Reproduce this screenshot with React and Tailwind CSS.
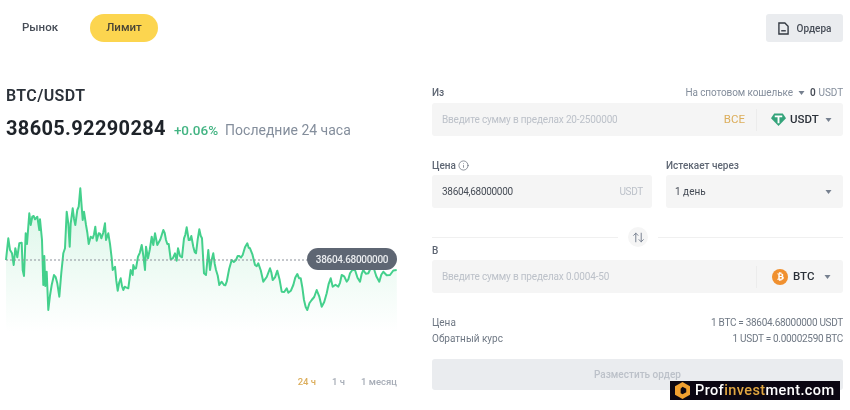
import { ArrowUpDown, Info } from "lucide-react";
import { FaBtc } from "react-icons/fa";

// traced from the reference, in 3x zoom coordinates
const RAW = [
  [18,270],[25,205],[30,240],[36,250],[41,285],[46,235],[52,262],[58,220],[65,218],[68,300],[72,318],[77,190],[81,222],[88,130],[92,165],[97,140],[105,148],[112,140],[118,180],[120,148],[126,210],[130,345],[133,258],[136,348],[140,305],[145,420],[155,345],[162,315],[172,340],[178,380],[190,250],[195,235],[200,125],[205,160],[209,230],[212,160],[218,115],[226,165],[232,120],[236,110],[241,55],[248,150],[252,125],[258,165],[266,222],[272,200],[278,205],[286,170],[290,212],[296,190],[304,205],[315,160],[318,210],[325,190],[335,265],[338,300],[345,290],[353,362],[362,325],[370,360],[378,352],[385,355],[392,300],[398,315],[400,285],[408,295],[414,260],[425,225],[435,300],[438,230],[444,265],[455,200],[460,225],[465,190],[472,225],[490,180],[498,210],[506,222],[512,268],[525,250],[530,272],[534,235],[540,258],[546,262],[552,205],[560,172],[566,210],[574,198],[580,230],[588,250],[598,178],[606,205],[612,310],[618,315],[625,240],[630,300],[640,250],[648,300],[658,345],[665,335],[672,345],[680,335],[695,270],[708,270],[718,258],[728,255],[742,220],[750,235],[765,285],[775,280],[790,335],[810,295],[818,330],[832,302],[845,365],[860,355],[865,368],[880,345],[892,312],[902,325],[912,390],[922,420],[935,390],[950,360],[965,410],[980,370],[992,325],[998,350],[1015,350],[1025,315],[1040,335],[1050,310],[1065,300],[1080,335],[1090,300],[1105,310],[1120,290],[1138,335],[1150,305],[1170,315],[1190,300],
];

// long segments get a midpoint pushed up or down, the real line is noisy
const points = [];
RAW.forEach(([x, y], i) => {
  const prev = RAW[i - 1];
  if (prev && x - prev[0] >= 8) {
    points.push([(x + prev[0]) / 6, (y + prev[1]) / 6 + 170 + (i % 2 ? 2 : -2)]);
  }
  points.push([x / 3, y / 3 + 170]);
});
const line = points.map(([x, y], i) => `${i ? "L" : "M"}${x.toFixed(1)} ${y.toFixed(1)}`).join(" ");
const area = `${line} L397 332 L6 332 Z`;

const Caret = ({ className = "" }) => (
  <svg viewBox="0 0 10 6" className={`h-[4px] w-[7px] fill-[#76808f] ${className}`}>
    <path d="M0.5 0h9L5 6z" />
  </svg>
);

const TetherIcon = () => (
  <svg viewBox="0 0 16 16" className="h-[15px] w-[15px]">
    <path d="M3.4 1.5h9.2L16 6.6 8 15 0 6.6z" fill="#34a37a" />
    <path d="M4 3.6h8v2H9v6.4H7V5.6H4z" fill="#fff" />
  </svg>
);

const Field = ({ placeholder, children }) => (
  <div className="flex h-[33px] items-center rounded-[3px] bg-[#f5f5f5] pl-[10px] text-[10px]">
    <span className="flex-1 tracking-[-0.17px] text-[#bcc1c9]">{placeholder}</span>
    {children}
  </div>
);

function Chart() {
  return (
    <div className="relative -ml-[6px] mt-[17px] h-[190px]">
      <svg viewBox="0 160 397 190" className="h-[190px] w-[397px]">
        <defs>
          <linearGradient id="fade" x1="0" y1="0" x2="0" y2="1">
            <stop offset="0%" stopColor="#d8f5e6" />
            <stop offset="100%" stopColor="#ffffff" />
          </linearGradient>
        </defs>
        <path d={area} fill="url(#fade)" />
        <path d={line} fill="none" stroke="#44d08c" strokeWidth="2" strokeLinejoin="round" />
        <line x1="6" x2="310" y1="260" y2="260" stroke="#8b9099" strokeDasharray="2 2" />
      </svg>
      <div className="absolute left-[307px] top-[88px] flex h-[22px] w-[90px] items-center justify-center rounded-full bg-[#5e6673] text-[10px] font-medium tracking-[-0.3px] text-[#eaecef]">
        38604.68000000
      </div>
    </div>
  );
}

export default function App() {
  return (
    <div className="relative flex h-[410px] w-[850px] flex-col overflow-hidden bg-white font-['Roboto',sans-serif] text-[#474d57] blur-[0.3px]">
      <div className="mt-[14px] flex h-[28px] items-center justify-between pl-[22px] pr-[7px]">
        <div className="flex items-center text-[11.5px] font-medium">
          <span className="w-[68px]">Рынок</span>
          <span className="flex h-[28px] w-[68px] items-center justify-center rounded-full bg-[#fcd54f] text-[#4a4536]">
            Лимит
          </span>
        </div>
        <div className="flex h-[28px] w-[77px] items-center justify-center gap-[8px] rounded-[3px] bg-[#eaecef] text-[10px] font-medium">
          <svg viewBox="0 0 12 14" className="h-[13px] w-[11px] fill-none stroke-[#333942] stroke-[1.5]">
            <path d="M1 1h6.5L11 4.5V13H1z" />
            <path d="M3.5 9.5h5" />
          </svg>
          Ордера
        </div>
      </div>

      <div className="flex pl-[6px] pr-[7px]">
        <div className="w-[391px] pt-[44px]">
          <div className="text-[16px] font-semibold leading-[19px] tracking-[0.4px] text-[#2b3139]">BTC/USDT</div>
          <div className="mt-[10px] flex items-baseline leading-[26px]">
            <span className="text-[20px] font-bold tracking-[0.35px] text-[#1e2329]">38605.92290284</span>
            <span className="ml-[8px] text-[13.5px] font-medium text-[#43b483]">+0.06%</span>
            <span className="ml-[7px] text-[14px] text-[#848e9c]">Последние 24 часа</span>
          </div>
          <Chart />
          <div className="mt-[25px] flex justify-end gap-[16px] text-[9.5px] font-medium text-[#a7adb7]">
            <span className="text-[#dcae5c]">24 ч</span>
            <span>1 ч</span>
            <span>1 месяц</span>
          </div>
        </div>

        <div className="ml-[35px] w-[411px] pt-[42px] text-[10px]">
          <div className="mt-[2px] flex h-[13px] items-center justify-between">
            <span className="font-medium text-[#5e6673]">Из</span>
            <span className="flex items-center tracking-[-0.1px] text-[#848e9c]">
              На спотовом кошельке
              <Caret className="ml-[5px] mr-[5px]" />
              <span className="font-semibold text-[#474d57]">0</span>
              <span className="ml-[3px]">USDT</span>
            </span>
          </div>
          <div className="mt-[4px]">
            <Field placeholder="Введите сумму в пределах 20-2500000">
              <span className="mr-[11px] text-[11.5px] text-[#dcae5c]">ВСЕ</span>
              <span className="h-[22px] w-px bg-[#ececec]" />
              <span className="flex w-[86px] items-center justify-start pl-[13px] text-[11.5px] font-medium text-[#2b3139]">
                <span className="flex h-[16px] w-[16px] items-center justify-center">
                  <TetherIcon />
                </span>
                <span className="ml-[4px]">USDT</span>
                <Caret className="ml-[6px]" />
              </span>
            </Field>
          </div>

          <div className="mt-[22px] flex gap-[14px]">
            <div className="w-[220px]">
              <div className="flex h-[14px] items-center gap-[2px] font-medium text-[#5e6673]">
                Цена <Info size={11} strokeWidth={1.5} />
              </div>
              <div className="mt-[3px] flex h-[33px] items-center justify-between rounded-[3px] bg-[#f5f5f5] pl-[10px] pr-[9px] tracking-[-0.3px] text-[#474d57]">
                38604,68000000
                <span className="text-[#bcc1c9]">USDT</span>
              </div>
            </div>
            <div className="w-[177px]">
              <div className="flex h-[14px] items-center font-medium text-[#5e6673]">Истекает через</div>
              <div className="mt-[3px] flex h-[33px] items-center justify-between rounded-[3px] bg-[#f5f5f5] pl-[9px] pr-[11px] text-[#474d57]">
                1 день
                <Caret />
              </div>
            </div>
          </div>

          <div className="mt-[19px] flex h-[20px] items-center">
            <span className="h-px flex-1 bg-[#f0f0f0]" />
            <span className="mx-[10px] flex h-[20px] w-[20px] items-center justify-center rounded-full bg-[#f5f5f5] text-[#76808f]">
              <ArrowUpDown size={13} strokeWidth={1.8} />
            </span>
            <span className="h-px w-[185px] bg-[#f0f0f0]" />
          </div>

          <div className="-mt-[4px] h-[14px] font-medium text-[#5e6673]">В</div>
          <div className="mt-[3px]">
            <Field placeholder="Введите сумму в пределах 0.0004-50">
              <span className="h-[22px] w-px bg-[#ececec]" />
              <span className="flex w-[86px] items-center justify-start pl-[15px] text-[11.5px] font-medium text-[#2b3139]">
                <span className="flex h-[16px] w-[16px] items-center justify-center rounded-full bg-[#f0902f] text-white">
                  <FaBtc size={9} />
                </span>
                <span className="ml-[5px]">BTC</span>
                <Caret className="ml-[10px]" />
              </span>
            </Field>
          </div>

          <div className="mt-[21px] flex h-[16px] items-center justify-between text-[#6f7884]">
            <span>Цена</span>
            <span className="tracking-[-0.3px]">1 BTC = 38604.68000000 USDT</span>
          </div>
          <div className="flex h-[17px] items-center justify-between text-[#6f7884]">
            <span>Обратный курс</span>
            <span className="tracking-[-0.3px]">1 USDT = 0.00002590 BTC</span>
          </div>
          <div className="mt-[12px] flex h-[31px] items-center justify-center rounded-[3px] bg-[#eaecef] font-medium text-[#bcc1c9]">
            Разместить ордер
          </div>
        </div>
      </div>

      <div className="absolute left-[670px] top-[381px] flex h-[19px] w-[170px] items-center gap-[5px] bg-[#0b0612] pl-[5px] text-[14.5px] font-medium tracking-[0.4px] text-white">
        <svg viewBox="0 0 16 18" className="h-[17px] w-[15px]">
          <path d="M8 0l8 4.5v9L8 18l-8-4.5v-9z" fill="#f0a030" />
          <path d="M8 5l4 2.2v3.6L8 13l-2-1V7z" fill="#0b0612" />
        </svg>
        <span>
          Prof<span className="text-[#e0a640]">invest</span>ment.com
        </span>
      </div>
    </div>
  );
}
